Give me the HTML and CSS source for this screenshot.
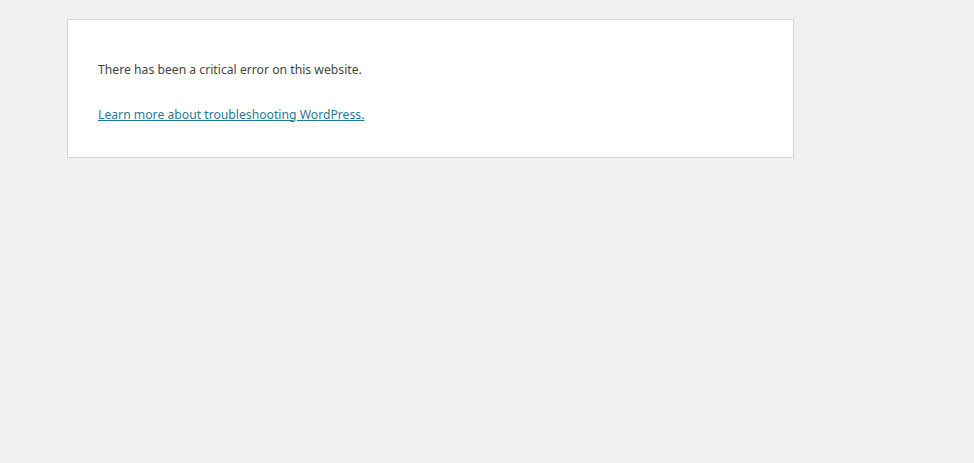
FILE: index.html
```html
<!DOCTYPE html>
<html lang="en">
<head>
<meta charset="utf-8">
<title>WordPress › Error</title>
<link rel="stylesheet" href="styles.css">
</head>
<body>
<div class="error-page">
<p>There has been a critical error on this website.</p>
<p><a href="#">Learn more about troubleshooting WordPress.</a></p>
</div>
</body>
</html>
```
FILE: styles.css
```css
html { background: #f1f1f1; }
body {
  margin: 0;
  padding: 19px 0 0 67px;
  font-family: "Noto Sans", "Open Sans", sans-serif;
  color: #444;
}
.error-page {
  box-sizing: border-box;
  width: 727px;
  background: #fff;
  border: 1px solid #d4d6d8;
  box-shadow: 0 1px 1px rgba(0,0,0,.04);
  padding: 15px 30px 13px;
  overflow: hidden;
}
.error-page p {
  font-size: 12.2px;
  line-height: 19.5px;
  margin: 25px 0 20px;
}
.error-page a { color: #1f7a94; }
```
